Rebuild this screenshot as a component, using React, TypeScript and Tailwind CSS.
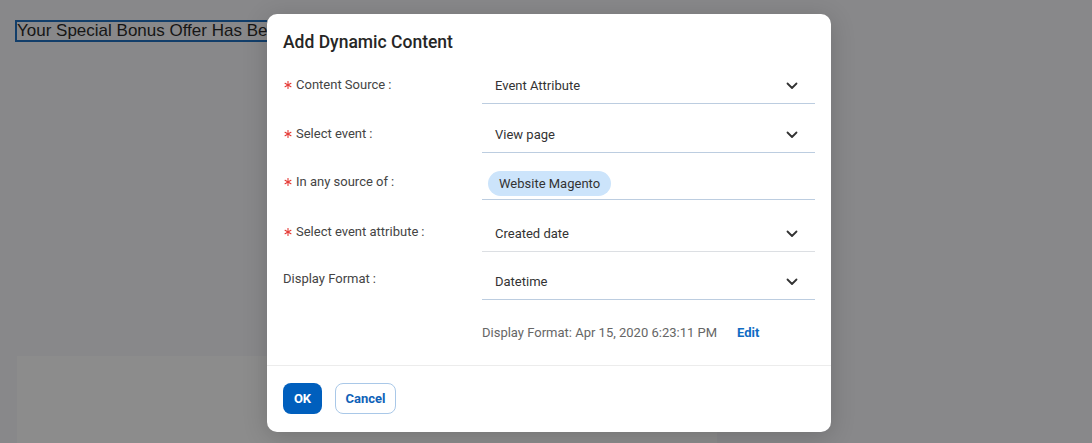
import React from "react";

const Chevron = () => (
  <svg width="12" height="8" viewBox="0 0 12 8" fill="none">
    <path d="M1.5 1.5L6 6L10.5 1.5" stroke="#333" strokeWidth="1.8" strokeLinecap="round" strokeLinejoin="round" />
  </svg>
);

const Star = () => (
  <svg width="8" height="8" viewBox="0 0 8 8" className="ml-[1px] mr-[4px]">
    <g stroke="#e53935" strokeWidth="1.1" strokeLinecap="round">
      <path d="M4 0.6V7.4" />
      <path d="M1.05 2.3L6.95 5.7" />
      <path d="M1.05 5.7L6.95 2.3" />
    </g>
  </svg>
);

const Label = ({ text, required, pt }: { text: string; required?: boolean; pt: string }) => (
  <div className={`w-[199px] shrink-0 self-start flex items-center text-[13px] leading-[16px] text-[#444] ${pt}`}>
    {required ? <Star /> : null}
    <span>{text}</span>
    <span className="ml-[3px]">:</span>
  </div>
);

const Select = ({ value, line, pt }: { value: string; line: string; pt: string }) => (
  <div className={`w-[333px] h-[38px] border-b ${line} flex items-center justify-between pl-[13px] pr-[17px] ${pt}`}>
    <span className="text-[13px] text-[#333]">{value}</span>
    <Chevron />
  </div>
);

export default function App() {
  return (
    <div className="relative w-[1092px] h-[443px] overflow-hidden bg-[#88888a]" style={{ fontFamily: "Roboto, 'Noto Sans', sans-serif" }}>
      <div className="pt-[20px] pl-[15px]">
        <div className="w-[252px] overflow-hidden">
          <div className="w-[400px] h-[22px] border-2 border-[#123e6a] flex items-center text-[17px] text-[#161616] whitespace-nowrap" style={{ fontFamily: "'Liberation Sans', Arial, sans-serif" }}>
            Your Special Bonus Offer Has Be
          </div>
        </div>
      </div>
      <div className="ml-[17px] mt-[314px] w-[700px] h-[100px] bg-[#8c8c8c]" />

      <div className="absolute left-[267px] top-[14px] w-[564px] h-[418px] bg-white rounded-[10px] shadow-[0_4px_24px_rgba(0,0,0,0.18)] flex flex-col">
        <div className="pl-[16px] pt-[16px] pr-[16px]">
          <div className="text-[17.5px] leading-[24px] font-medium text-[#262626]">Add Dynamic Content</div>

          <div className="flex mt-[12px]">
            <Label text="Content Source" required pt="pt-[11px]" />
            <Select value="Event Attribute" line="border-[#bccde0]" pt="pt-[2px]" />
          </div>

          <div className="flex mt-[11px]">
            <Label text="Select event" required pt="pt-[11px]" />
            <Select value="View page" line="border-[#bccde0]" pt="pt-[2px]" />
          </div>

          <div className="flex mt-[9px]">
            <Label text="In any source of" required pt="pt-[12px]" />
            <div className="w-[333px] h-[38px] border-b border-[#bccde0] pl-[6px] pt-[9px]">
              <div className="inline-flex items-center h-[25px] px-[11px] rounded-full bg-[#cce4fb] text-[13px] text-[#333]">Website Magento</div>
            </div>
          </div>

          <div className="flex mt-[14px]">
            <Label text="Select event attribute" required pt="pt-[10px]" />
            <Select value="Created date" line="border-[#dcdfe3]" pt="pt-[2px]" />
          </div>

          <div className="flex mt-[10px]">
            <Label text="Display Format" pt="pt-[9px]" />
            <Select value="Datetime" line="border-[#bccde0]" pt="pt-[3px]" />
          </div>

          <div className="flex items-center ml-[199px] mt-[24px] h-[18px] text-[13px]">
            <span className="text-[#666]">Display Format: Apr 15, 2020 6:23:11 PM</span>
            <span className="ml-[20px] font-bold text-[#0f6cc4]">Edit</span>
          </div>
        </div>

        <div className="mt-[23px] border-t border-[#ececec]" />
        <div className="flex items-center gap-[13px] pl-[16px] pt-[17px]">
          <button className="w-[39px] h-[31px] rounded-[8px] bg-[#005fbd] text-white text-[13px] font-bold">OK</button>
          <button className="w-[61px] h-[31px] rounded-[8px] border border-[#a9c8e8] bg-white text-[#0f62b8] text-[13px] font-bold">Cancel</button>
        </div>
      </div>
    </div>
  );
}
